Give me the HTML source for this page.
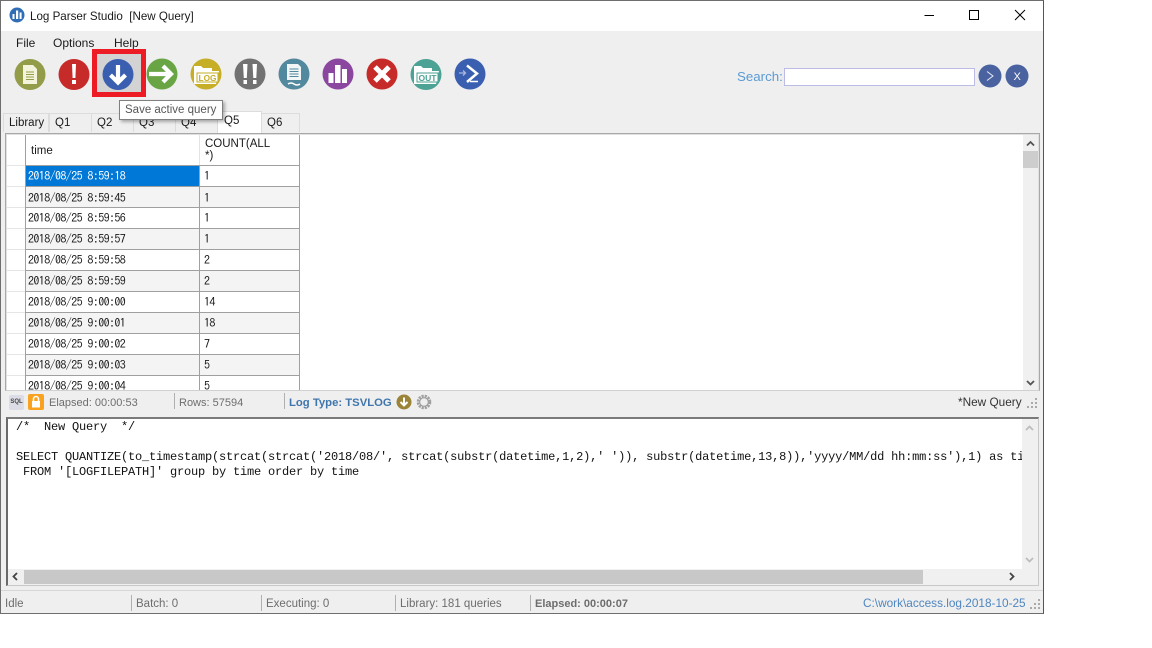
<!DOCTYPE html>
<html><head><meta charset="utf-8"><style>
html,body{margin:0;padding:0;width:1152px;height:648px;background:#fff;overflow:hidden}
body{position:relative;font-family:"Liberation Sans",sans-serif;font-size:11.5px;color:#1a1a1a}
.a{position:absolute;white-space:nowrap}
.tab{position:absolute;top:113px;height:19px;background:#efefef;border:1px solid #dcdcdc;border-bottom:0;box-sizing:border-box;line-height:19px;padding-left:5px;font-size:11.5px}
.g{font-family:"IPAGothic",monospace;font-size:12px;letter-spacing:-.6px;position:absolute;white-space:nowrap;line-height:21px;margin-top:1px}
.r{position:absolute;left:7px;width:293px;height:21px;box-sizing:border-box;border-bottom:1px solid #a0a0a0}
.r::before{content:"";position:absolute;left:0;bottom:-1px;width:18px;height:1px;background:#e6e6e6}
.sql{position:absolute;left:16px;font-family:"Liberation Mono",monospace;font-size:12px;letter-spacing:-.2px;white-space:pre;line-height:15px;color:#111}
.st{color:#6d6d6d;font-size:11px;position:absolute;white-space:nowrap}
.sep{position:absolute;width:1px;background:#b0b0b0}
</style></head><body>
<div class="a" style="left:0;top:0;width:1044px;height:614px;box-sizing:border-box;border:1px solid #6e6e6e;border-right-color:#555;background:#efefef"></div>
<div class="a" style="left:1px;top:1px;width:1042px;height:30px;background:#fff"></div>
<svg class="a" style="left:9px;top:7px" width="16" height="16" viewBox="0 0 16 16"><circle cx="8" cy="8" r="7.5" fill="#2f6db5"/><rect x="3.5" y="7" width="2" height="5" fill="#fff"/><rect x="7" y="3.5" width="2.2" height="8.5" fill="#fff"/><rect x="10.6" y="5.5" width="2" height="6.5" fill="#fff"/></svg>
<div class="a" style="left:30px;top:10px;font-size:11.6px">Log Parser Studio&nbsp; [New Query]</div>
<svg class="a" style="left:920px;top:5px" width="110" height="20"><path d="M4.5 10.5H14" stroke="#000" fill="none"/><rect x="49.5" y="5.5" width="9" height="9" fill="none" stroke="#000"/><path d="M95 5l10 10M105 5l-10 10" stroke="#000" fill="none"/></svg>
<div class="a" style="left:16px;top:36px;font-size:12px">File</div>
<div class="a" style="left:53px;top:36px;font-size:12px">Options</div>
<div class="a" style="left:114px;top:36px;font-size:12px">Help</div>
<div class="a" style="left:92px;top:49px;width:54px;height:48px;box-sizing:border-box;border:5px solid #ed1c24;background:#d3d3d3"></div>
<svg class="a" style="left:0;top:50px" width="500" height="50" viewBox="0 50 500 50">
<circle cx="30" cy="74.500" r="15.500" fill="#939c48"/><path d="M23 65h10l4 4v15H23z" fill="#f4f3dc"/><path d="M26 72h8M26 74.500h8M26 77h8M26 79.500h8" stroke="#939c48"/>
<circle cx="74" cy="74.500" r="15.500" fill="#c62b29"/><path d="M72 64h4l-.6 14h-2.800z" fill="#fff"/><rect x="72" y="80" width="4" height="4" fill="#fff"/>
<circle cx="118" cy="74.500" r="15.500" fill="#3a5fb0"/><path d="M118 65v17M110.500 75l7.500 7.500 7.500-7.500" fill="none" stroke="#fff" stroke-width="4.200"/>
<circle cx="162" cy="74" r="15.500" fill="#69a545"/><path d="M149 74h23M163 66l8 8-8 8" fill="none" stroke="#fff" stroke-width="4.200"/>
<circle cx="206" cy="74" r="15.500" fill="#c6ae27"/><path d="M194 66h7l2 2h9v3h7l-3 13h-22z" fill="#fff"/><rect x="197" y="73" width="21" height="9" fill="#fff" stroke="#c6ae27"/><text x="198.500" y="81" font-family="Liberation Sans" font-weight="bold" font-size="8" textLength="18" lengthAdjust="spacingAndGlyphs" fill="#c6ae27">LOG</text>
<circle cx="250" cy="74" r="15.500" fill="#727272"/><path d="M243 64h4.500l-.7 14h-3zM252.500 64h4.500l-.7 14h-3z" fill="#fff"/><rect x="243.500" y="80" width="3.500" height="4" fill="#fff"/><rect x="253" y="80" width="3.500" height="4" fill="#fff"/>
<circle cx="294" cy="74" r="15.500" fill="#53899e"/><path d="M287 64h11l3 3v13h-14z" fill="#f3f6f7"/><path d="M289.500 69h9M289.500 71.500h9M289.500 74h9M289.500 76.500h9" stroke="#53899e"/><path d="M288 84q3-2 6 0t6-0" stroke="#fff" stroke-width="1.500" fill="none"/>
<circle cx="338" cy="74" r="15.500" fill="#8b479f"/><rect x="328.500" y="73" width="5" height="10" fill="#fff"/><rect x="335" y="65" width="5.500" height="18" fill="#fff"/><rect x="342" y="69" width="5" height="14" fill="#fff"/>
<circle cx="382" cy="74" r="15.500" fill="#c62b29"/><path d="M375 67l14 14M389 67l-14 14" stroke="#fff" stroke-width="5"/>
<circle cx="426" cy="74.500" r="15.500" fill="#4ba295"/><path d="M414 66h7l2 2h9v3h7l-3 13h-22z" fill="#fff"/><rect x="417" y="73" width="21" height="9" fill="#fff" stroke="#4ba295"/><text x="418.500" y="81" font-family="Liberation Sans" font-weight="bold" font-size="8" textLength="18" lengthAdjust="spacingAndGlyphs" fill="#4ba295">OUT</text>
<circle cx="470" cy="74" r="15.500" fill="#3a5fb0"/><path d="M467 65.500l10 8-10 8.500" fill="none" stroke="#fff" stroke-width="2.500"/><path d="M470 81.500h8" stroke="#fff" stroke-width="1.500"/><path d="M459 73h6M463 70.500l2.500 2.500-2.500 2.500" stroke="#a8b8e0" fill="none" stroke-width="1.300"/>
</svg>
<div class="a" style="left:737px;top:69px;color:#5b9bd5;font-size:13.300px">Search:</div>
<div class="a" style="left:784px;top:68px;width:191px;height:18px;box-sizing:border-box;border:1px solid #bcbce6;background:#fff"></div>
<svg class="a" style="left:978px;top:64px" width="54" height="24"><circle cx="12" cy="12" r="11.500" fill="#4a629f"/><path d="M9 7.500l6 4.500-6 4.500" fill="none" stroke="#e8ecf6"/><circle cx="39" cy="12" r="11.500" fill="#4a629f"/><text x="35.500" y="16" font-family="Liberation Sans" font-size="11" fill="#fff">X</text></svg>

<div class="tab" style="left:3px;width:46px">Library</div>
<div class="tab" style="left:49px;width:43px">Q1</div>
<div class="tab" style="left:91px;width:43px">Q2</div>
<div class="tab" style="left:133px;width:43px">Q3</div>
<div class="tab" style="left:175px;width:43px">Q4</div>
<div class="tab" style="left:217px;width:45px;top:111px;height:22px;background:#fff;line-height:18px;padding-left:6px">Q5</div>
<div class="tab" style="left:261px;width:39px">Q6</div>

<div class="a" style="left:5px;top:133px;width:1035px;height:258px;box-sizing:border-box;border:1px solid #a8a8a8;border-bottom:1px solid #d0d0d0;background:#fff;outline:1px solid #e0e0e0;outline-offset:-2px"></div>
<div class="a" id="grid" style="left:7px;top:135px;width:1031px;height:255px;background:#fff;overflow:hidden">
 <div class="a" style="left:24px;top:10px;font-size:11.5px">time</div>
 <div class="a" style="left:198px;top:3px;font-size:11.5px;line-height:12px">COUNT(ALL<br>*)</div>
</div>
<div class="a" style="left:7px;top:135px;width:293px;height:255px;overflow:hidden">
 <div class="a" style="left:18px;top:30px;width:275px;height:1px;background:#a0a0a0"></div>
 <div class="a" style="left:0;top:30px;width:18px;height:1px;background:#e6e6e6"></div>
 <div class="r" style="left:0;top:31px;background:#fff"></div>
 <div class="a" style="left:19px;top:31px;width:173px;height:20px;background:#0078d7"></div>
 <div class="r" style="left:0;top:52px;background:linear-gradient(90deg,#fff 18px,#f4f4f4 18px)"></div>
 <div class="r" style="left:0;top:73px"></div>
 <div class="r" style="left:0;top:94px;background:linear-gradient(90deg,#fff 18px,#f4f4f4 18px)"></div>
 <div class="r" style="left:0;top:115px"></div>
 <div class="r" style="left:0;top:136px;background:linear-gradient(90deg,#fff 18px,#f4f4f4 18px)"></div>
 <div class="r" style="left:0;top:157px"></div>
 <div class="r" style="left:0;top:178px;background:linear-gradient(90deg,#fff 18px,#f4f4f4 18px)"></div>
 <div class="r" style="left:0;top:199px"></div>
 <div class="r" style="left:0;top:220px;background:linear-gradient(90deg,#fff 18px,#f4f4f4 18px)"></div>
 <div class="r" style="left:0;top:241px"></div>
 <div class="a" style="left:18px;top:0;width:1px;height:255px;background:#a0a0a0"></div>
 <div class="a" style="left:192px;top:30px;width:1px;height:225px;background:#a0a0a0"></div>
 <div class="a" style="left:192px;top:0;width:1px;height:30px;background:#e4e4e4"></div>
 <div class="a" style="left:292px;top:0;width:1px;height:255px;background:#a0a0a0"></div>
 <div class="g" style="left:21px;top:30px;color:#fff">2018/08/25 8:59:18</div><div class="g" style="left:197px;top:30px">1</div>
 <div class="g" style="left:21px;top:52px">2018/08/25 8:59:45</div><div class="g" style="left:197px;top:52px">1</div>
 <div class="g" style="left:21px;top:72px">2018/08/25 8:59:56</div><div class="g" style="left:197px;top:72px">1</div>
 <div class="g" style="left:21px;top:93px">2018/08/25 8:59:57</div><div class="g" style="left:197px;top:93px">1</div>
 <div class="g" style="left:21px;top:114px">2018/08/25 8:59:58</div><div class="g" style="left:197px;top:114px">2</div>
 <div class="g" style="left:21px;top:135px">2018/08/25 8:59:59</div><div class="g" style="left:197px;top:135px">2</div>
 <div class="g" style="left:21px;top:156px">2018/08/25 9:00:00</div><div class="g" style="left:197px;top:156px">14</div>
 <div class="g" style="left:21px;top:177px">2018/08/25 9:00:01</div><div class="g" style="left:197px;top:177px">18</div>
 <div class="g" style="left:21px;top:198px">2018/08/25 9:00:02</div><div class="g" style="left:197px;top:198px">7</div>
 <div class="g" style="left:21px;top:219px">2018/08/25 9:00:03</div><div class="g" style="left:197px;top:219px">5</div>
 <div class="g" style="left:21px;top:240px">2018/08/25 9:00:04</div><div class="g" style="left:197px;top:240px">5</div>
</div>
<div class="a" style="left:1023px;top:135px;width:15px;height:255px;background:#f0f0f0"></div>
<div class="a" style="left:1023px;top:151px;width:15px;height:17px;background:#cdcdcd"></div>
<svg class="a" style="left:1023px;top:135px" width="15" height="255"><path d="M4 10.500l3.500-3.500 3.500 3.500M4 246l3.500 3.500 3.500-3.500" fill="none" stroke="#555" stroke-width="1.800"/></svg>

<div class="a" style="left:1px;top:391px;width:1042px;height:25px;background:#efefef"></div>
<div class="a" style="left:9px;top:395px;width:15px;height:15px;background:#dcdce6;border-radius:2px;font-size:6px;font-weight:bold;line-height:15px;text-align:center;color:#444">SQL</div>
<svg class="a" style="left:28px;top:394px" width="16" height="16"><rect width="16" height="16" rx="2" fill="#f9a21f"/><rect x="4" y="7" width="8" height="6.500" fill="#fff"/><path d="M5.500 7V5a2.500 2.500 0 0 1 5 0v2" fill="none" stroke="#fff" stroke-width="1.500"/></svg>
<div class="st" style="left:49px;top:397px">Elapsed: 00:00:53</div>
<div class="sep" style="left:174px;top:393px;height:16px"></div>
<div class="st" style="left:179px;top:397px">Rows: 57594</div>
<div class="sep" style="left:284px;top:393px;height:16px"></div>
<div class="a" style="left:289px;top:397px;color:#3f76ad;font-weight:bold;font-size:11.300px">Log Type: TSVLOG</div>
<svg class="a" style="left:396px;top:394px" width="40" height="16"><circle cx="8" cy="8" r="7.500" fill="#9a8437"/><path d="M8 3.500v8M4.500 8l3.500 3.500L11.500 8" fill="none" stroke="#fff" stroke-width="2"/><circle cx="28" cy="8" r="6" fill="none" stroke="#a0a0a0" stroke-width="2.600" stroke-dasharray="2.200 1"/><circle cx="28" cy="8" r="4.300" fill="none" stroke="#999"/></svg>
<div class="a" style="left:958px;top:395px;color:#333;font-size:11.800px">*New Query</div>
<svg class="a" style="left:1026px;top:396px" width="14" height="14" fill="#aaa"><rect x="9" y="2" width="2" height="2"/><rect x="5" y="6" width="2" height="2"/><rect x="9" y="6" width="2" height="2"/><rect x="1" y="10" width="2" height="2"/><rect x="5" y="10" width="2" height="2"/><rect x="9" y="10" width="2" height="2"/></svg>

<div class="a" style="left:6px;top:417px;width:1033px;height:169px;box-sizing:border-box;background:#fff;border-top:2px solid #7a7a7a;border-left:2px solid #6a6a6a;border-right:1px solid #c8c8c8;border-bottom:1px solid #c8c8c8"></div>
<div class="sql" style="top:420px">/*  New Query  */</div>
<div class="a" style="left:16px;top:450px;width:1006px;height:16px;overflow:hidden"><div class="sql" style="left:0;top:0">SELECT QUANTIZE(to_timestamp(strcat(strcat('2018/08/', strcat(substr(datetime,1,2),' ')), substr(datetime,13,8)),'yyyy/MM/dd hh:mm:ss'),1) as time, COUNT(ALL *)</div></div>
<div class="sql" style="top:465px"> FROM '[LOGFILEPATH]' group by time order by time</div>
<div class="a" style="left:1022px;top:419px;width:16px;height:150px;background:#f0f0f0"></div>
<div class="a" style="left:8px;top:569px;width:1030px;height:16px;background:#f0f0f0"></div>
<div class="a" style="left:24px;top:570px;width:899px;height:14px;background:#c8c8c8"></div>
<svg class="a" style="left:8px;top:419px" width="1030" height="166"><path d="M1018 11l3.500-3.500 3.500 3.500M1018 139l3.500 3.500 3.500-3.500" fill="none" stroke="#bdbdbd" stroke-width="1.800"/><path d="M9 154l-3.500 3.500 3.500 3.500M1002 154l3.500 3.500-3.500 3.500" fill="none" stroke="#444" stroke-width="1.800"/></svg>

<div class="a" style="left:1px;top:590px;width:1042px;height:1px;background:#d6d6d6"></div>
<div class="st" style="left:5px;top:598px;font-size:11.500px">Idle</div>
<div class="sep" style="left:131px;top:595px;height:16px"></div>
<div class="st" style="left:136px;top:598px;font-size:11.500px">Batch: 0</div>
<div class="sep" style="left:261px;top:595px;height:16px"></div>
<div class="st" style="left:266px;top:598px;font-size:11.500px">Executing: 0</div>
<div class="sep" style="left:395px;top:595px;height:16px"></div>
<div class="st" style="left:400px;top:598px;font-size:11.500px">Library: 181 queries</div>
<div class="sep" style="left:530px;top:595px;height:16px"></div>
<div class="st" style="left:535px;top:598px;font-weight:bold;font-size:11px">Elapsed: 00:00:07</div>
<div class="a" style="left:863px;top:596px;color:#4f86c0;font-size:11.800px">C:\work\access.log.2018-10-25</div>
<svg class="a" style="left:1029px;top:598px" width="14" height="14" fill="#aaa"><rect x="9" y="1" width="2" height="2"/><rect x="5" y="5" width="2" height="2"/><rect x="9" y="5" width="2" height="2"/><rect x="1" y="9" width="2" height="2"/><rect x="5" y="9" width="2" height="2"/><rect x="9" y="9" width="2" height="2"/></svg>

<div class="a" style="left:119px;top:100px;width:104px;height:20px;box-sizing:border-box;border:1px solid #808080;background:#fff;box-shadow:2px 2px 3px rgba(0,0,0,.3);line-height:18px;padding-left:5px;font-size:11.500px;color:#575757">Save active query</div>
</body></html>
